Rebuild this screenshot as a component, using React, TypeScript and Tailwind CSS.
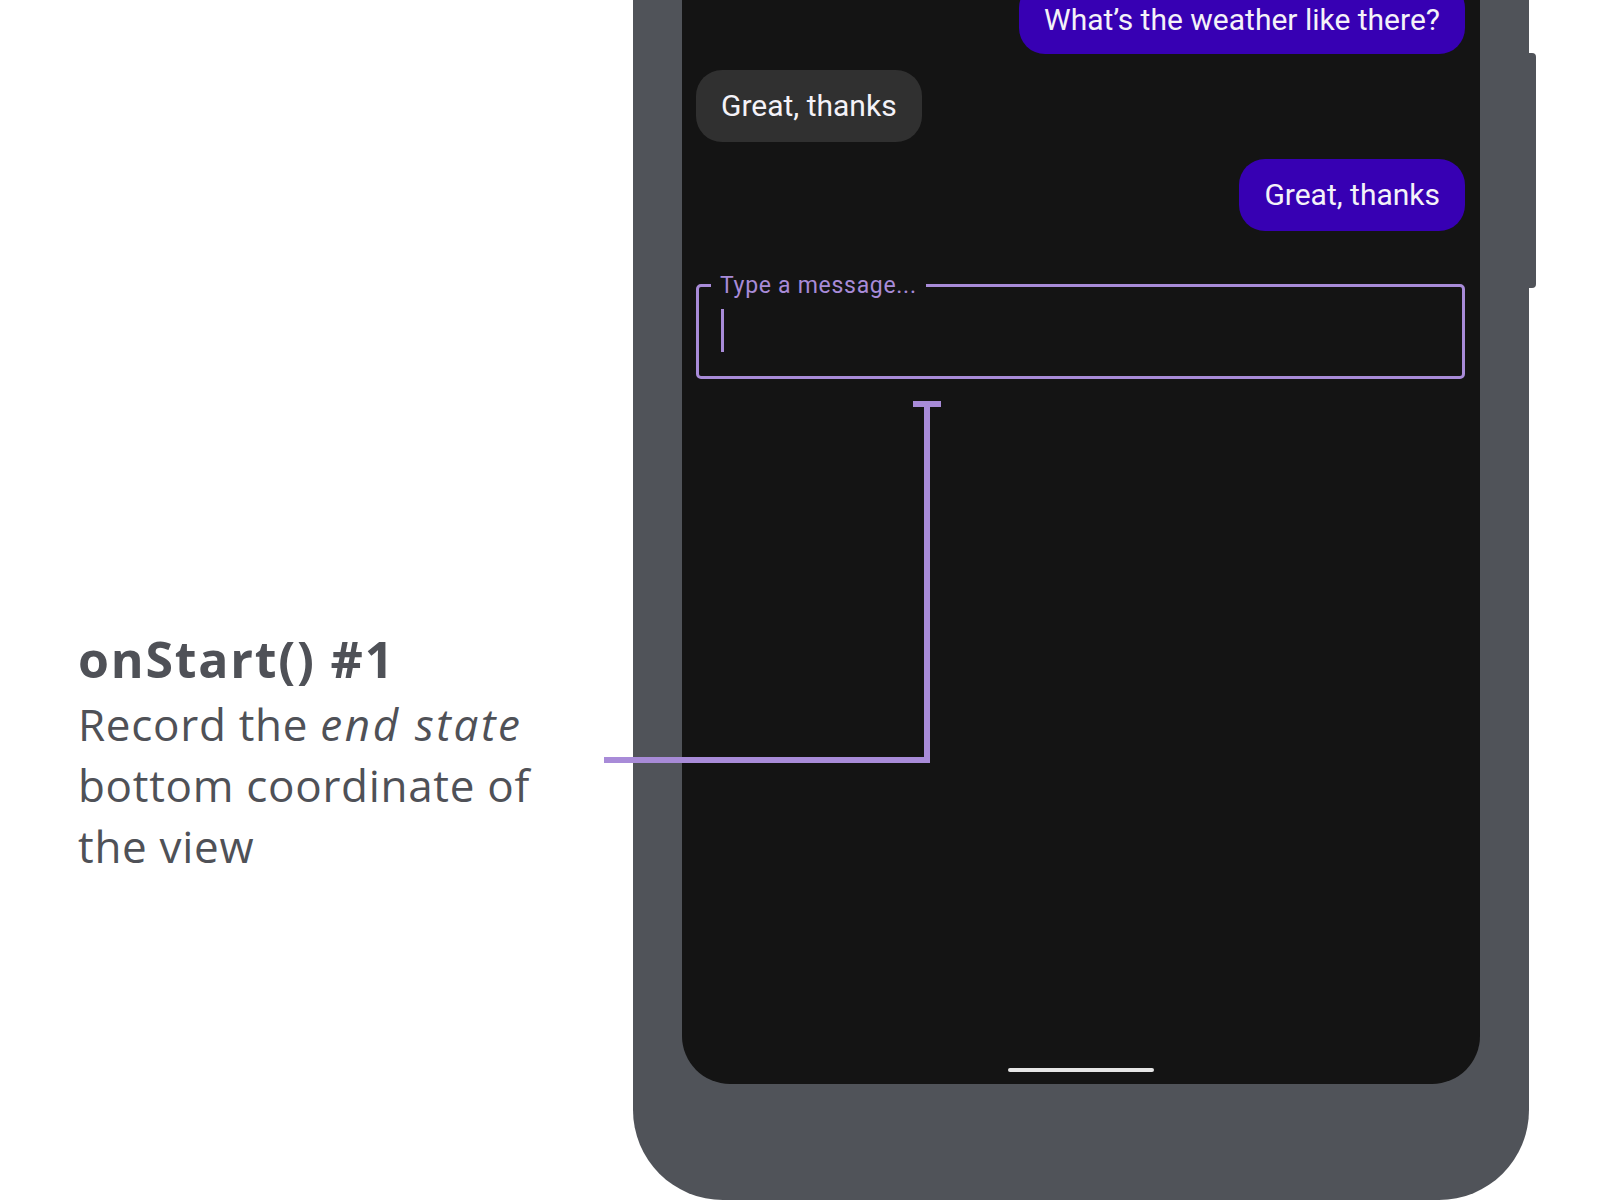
import React from "react";

const LINE = "bg-[#a88bd8]";

function Bubble({ text, me, className = "" }: { text: string; me?: boolean; className?: string }) {
  return (
    <div
      className={
        "h-[72px] rounded-[26px] px-[25px] flex items-center text-[30px] leading-none text-[#f4f2f8] whitespace-nowrap " +
        (me ? "self-end bg-[#3700b3] " : "self-start bg-[#303030] ") +
        className
      }
      style={{ fontFamily: "Roboto, 'Noto Sans', sans-serif" }}
    >
      {text}
    </div>
  );
}

export default function App() {
  return (
    <div className="relative w-[1600px] h-[1200px] bg-white overflow-hidden flex">
      {/* left caption */}
      <div
        className="w-[633px] shrink-0 pl-[78px] pt-[629px] text-[#4f5157]"
        style={{ fontFamily: "'Open Sans', Lato, sans-serif" }}
      >
        <div className="text-[50px] leading-[61px] font-bold tracking-[1.8px]">onStart() #1</div>
        <div className="mt-[4px] text-[44px] leading-[61px] tracking-[0.7px] w-[540px]">
          Record the <em className="italic tracking-[2.6px]">end state</em>
          <br />
          bottom coordinate of
          <br />
          the view
        </div>
      </div>

      {/* phone */}
      <div className="relative w-[896px] h-[1200px] shrink-0">
        <div className="absolute right-[-7px] top-[53px] w-[8px] h-[235px] rounded-r-[4px] bg-[#505359]" />
        <div className="relative h-full bg-[#505359] rounded-b-[90px] flex flex-col px-[49px] pb-[116px]">
          <div className="flex-1 bg-[#141414] rounded-b-[48px] flex flex-col pl-[14px] pr-[15px]">
            <Bubble me text="What’s the weather like there?" className="mt-[-18px] pt-[4px]" />
            <Bubble text="Great, thanks" className="mt-[16px]" />
            <Bubble me text="Great, thanks" className="mt-[17px]" />

            {/* text field */}
            <div className="relative mt-[53px] h-[95px] border-[3px] border-[#a88bd8] rounded-[5px] pl-[22px] pt-[22px]">
              <div
                className="absolute left-[12px] top-[-13px] px-[9px] bg-[#141414] text-[23px] leading-[24px] text-[#a88bd8] whitespace-nowrap tracking-[0.7px]"
                style={{ fontFamily: "Roboto, 'Noto Sans', sans-serif" }}
              >
                Type a message...
              </div>
              <div className={"w-[3px] h-[43px] " + LINE} />
            </div>

            <div className="mt-auto mb-[12px] self-center w-[146px] h-[4px] rounded-full bg-[#e6e6e6]" />
          </div>
        </div>
      </div>

      {/* connector */}
      <div className={"absolute left-[913px] top-[401px] w-[28px] h-[6px] " + LINE} />
      <div className={"absolute left-[924px] top-[401px] w-[6px] h-[362px] " + LINE} />
      <div className={"absolute left-[604px] top-[757px] w-[326px] h-[6px] " + LINE} />
    </div>
  );
}
